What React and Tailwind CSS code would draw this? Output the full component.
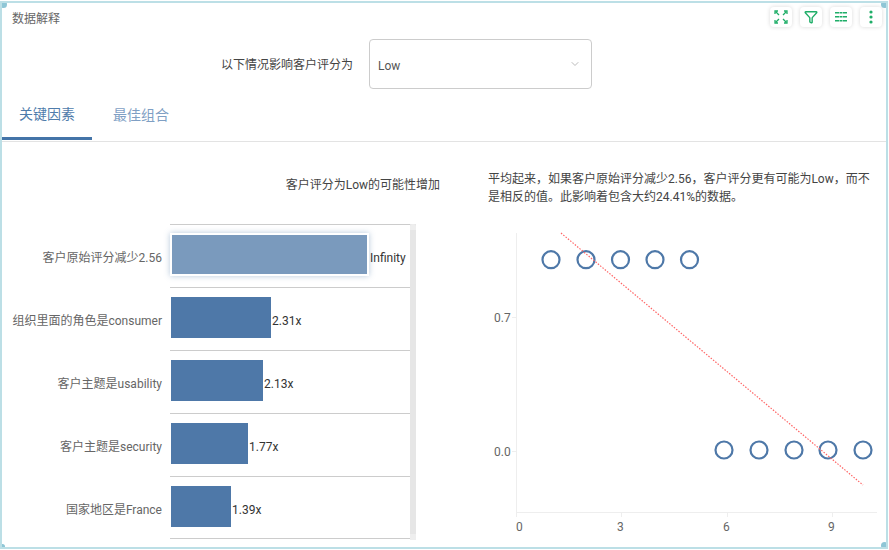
import React from "react";
import { ChevronDown, Funnel } from "lucide-react";

const FONT = "[font-family:'Roboto','Noto_Sans_CJK_SC',sans-serif]";

const rows = [
  { label: "客户原始评分减少2.56", value: "Infinity", width: 199, active: true },
  { label: "组织里面的角色是consumer", value: "2.31x", width: 100 },
  { label: "客户主题是usability", value: "2.13x", width: 92 },
  { label: "客户主题是security", value: "1.77x", width: 77 },
  { label: "国家地区是France", value: "1.39x", width: 60 },
];

const topDots = [551, 586, 620.5, 655, 689.5];
const bottomDots = [724, 759, 794, 828, 863];

function ToolButton({ children }) {
  return (
    <button className="flex h-5 w-[22px] items-center justify-center rounded bg-white text-[#1fae68] shadow-[0_0_4px_rgba(0,0,0,0.15)]">
      {children}
    </button>
  );
}

function Toolbar() {
  return (
    <div className="flex gap-2">
      <ToolButton>
        <svg width="14" height="14" viewBox="0 0 14 14" fill="none" stroke="currentColor" strokeWidth="1.3">
          <path d="M1 4V1h3M10 1h3v3M13 10v3h-3M4 13H1v-3M2 2l3 3M12 2L9 5M12 12L9 9M2 12l3-3" />
        </svg>
      </ToolButton>
      <ToolButton>
        <Funnel size={14} strokeWidth={2.4} />
      </ToolButton>
      <ToolButton>
        <svg width="14" height="12" viewBox="0 0 14 12" fill="currentColor">
          <path d="M1 1h4v1.5H1zM5.5 1h3v1.5h-3zM9 1h4v1.5H9zM1 5h4v1.5H1zM5.5 5h3v1.5h-3zM9 5h4v1.5H9zM1 9h4v1.5H1zM5.5 9h3v1.5h-3zM9 9h4v1.5H9z" />
        </svg>
      </ToolButton>
      <ToolButton>
        <svg width="4" height="14" viewBox="0 0 4 14" fill="currentColor">
          <circle cx="2" cy="2" r="1.6" />
          <circle cx="2" cy="7" r="1.6" />
          <circle cx="2" cy="12" r="1.6" />
        </svg>
      </ToolButton>
    </div>
  );
}

function BarRow({ row }) {
  return (
    <div className="flex h-[63px] items-center">
      <div className="w-40 shrink-0 whitespace-nowrap pt-1 text-right text-xs text-[#666]">{row.label}</div>
      <div className="ml-2 flex h-full w-[240px] items-center border-t border-[#ccc]">
        <div
          className={row.active ? "mb-[3px] h-[43px] border-2 border-white bg-[#7a9abd] shadow-[0_0_6px_rgba(78,121,167,0.4)]" : "mb-[3px] ml-px h-[41px] bg-[#4e78a8]"}
          style={{ width: row.width }}
        />
        <span className="whitespace-nowrap pl-px pt-1 text-xs text-[#333]">{row.value}</span>
      </div>
    </div>
  );
}

function ScatterChart() {
  return (
    <svg className="block h-[320px] w-[409px]" viewBox="480 225 409 320" fontSize="12" fill="#666">
      <path d="M516.5 232V511.5H877M512 316.5h4.5M512 450.5h4.5M516.5 511v5M621.5 511v5M727.5 511v5M832.5 511v5" fill="none" stroke="#eee" />
      <text x="494" y="321">0.7</text>
      <text x="494" y="455">0.0</text>
      <text x="516" y="530">0</text>
      <text x="617" y="530">3</text>
      <text x="723" y="530">6</text>
      <text x="828" y="530">9</text>
      {topDots.map((x) => (
        <circle key={x} cx={x} cy="258.7" r="8.5" fill="none" stroke="#4e78a8" strokeWidth="2.2" />
      ))}
      {bottomDots.map((x) => (
        <circle key={x} cx={x} cy="449" r="8.5" fill="none" stroke="#4e78a8" strokeWidth="2.2" />
      ))}
      <line x1="561" y1="232" x2="863" y2="484" stroke="#f66" strokeWidth="1.2" strokeDasharray="1.5 1.5" />
    </svg>
  );
}

export default function App() {
  return (
    <div className={`relative mt-px h-[548px] w-[888px] overflow-hidden border-2 border-[#bcdfe6] bg-white ${FONT}`}>
      <div className="flex h-[30px] items-start justify-between pl-2.5 pr-1">
        <span className="pt-2 text-xs text-[#666]">数据解释</span>
        <div className="pt-1">
          <Toolbar />
        </div>
      </div>

      <div className="mt-1.5 flex h-[50px] items-center">
        <span className="ml-[219px] w-[132px] whitespace-nowrap pt-0.5 text-xs text-[#444]">以下情况影响客户评分为</span>
        <div className="ml-4 flex h-[50px] w-[223px] items-center justify-between rounded-sm border border-[#ccc] pl-2 pr-2.5 text-xs text-[#555]">
          <span className="pt-1">Low</span>
          <ChevronDown size={12} className="text-[#bbb]" />
        </div>
      </div>

      <div className="mt-[11px] flex h-[42px] border-b border-[#e3e3e3]">
        <div className="flex h-10 w-[90px] items-center justify-center border-b-[3px] border-[#4474a8] pb-2.5 text-sm text-[#4f7cab]">关键因素</div>
        <div className="flex h-10 w-[98px] items-center justify-center pb-2.5 text-sm text-[#7f9fc4]">最佳组合</div>
      </div>

      <div className="flex">
        <div className="w-[486px] shrink-0">
          <div className="mt-[35px] w-[438px] text-right text-xs text-[#444]">客户评分为Low的可能性增加</div>
          <div className="relative mt-[31px] w-[414px]">
            {rows.map((row) => (
              <BarRow key={row.label} row={row} />
            ))}
            <div className="-mt-px ml-[168px] w-[240px] border-t border-[#ccc]" />
            <div className="absolute right-0 top-0 flex h-[316px] w-1.5 flex-col justify-between bg-[#e6e6e6]">
              <div className="h-1.5 rounded-t-sm bg-[#eeeeee]" />
              <div className="h-1.5 bg-[#eeeeee]" />
            </div>
          </div>
        </div>
        <div className="min-w-0 flex-1">
          <p className="mt-[28px] w-[384px] text-xs leading-[18px] text-[#444]">
            平均起来，如果客户原始评分减少2.56，客户评分更有可能为Low，而不是相反的值。此影响着包含大约24.41%的数据。
          </p>
          <div className="-ml-2 mt-5">
            <ScatterChart />
          </div>
        </div>
      </div>

      <span className="absolute -left-0.5 -top-0.5 h-[7px] w-[7px] rounded-full bg-[#8fc6d6]" />
      <span className="absolute -right-0.5 -top-0.5 h-[7px] w-[7px] rounded-full bg-[#8fc6d6]" />
      <span className="absolute -bottom-0.5 -right-0.5 h-[7px] w-[7px] rounded-full bg-[#8fc6d6]" />
      <span className="absolute -bottom-0.5 -left-0.5 h-[5px] w-[5px] rounded-full bg-[#8fc6d6]" />
    </div>
  );
}
